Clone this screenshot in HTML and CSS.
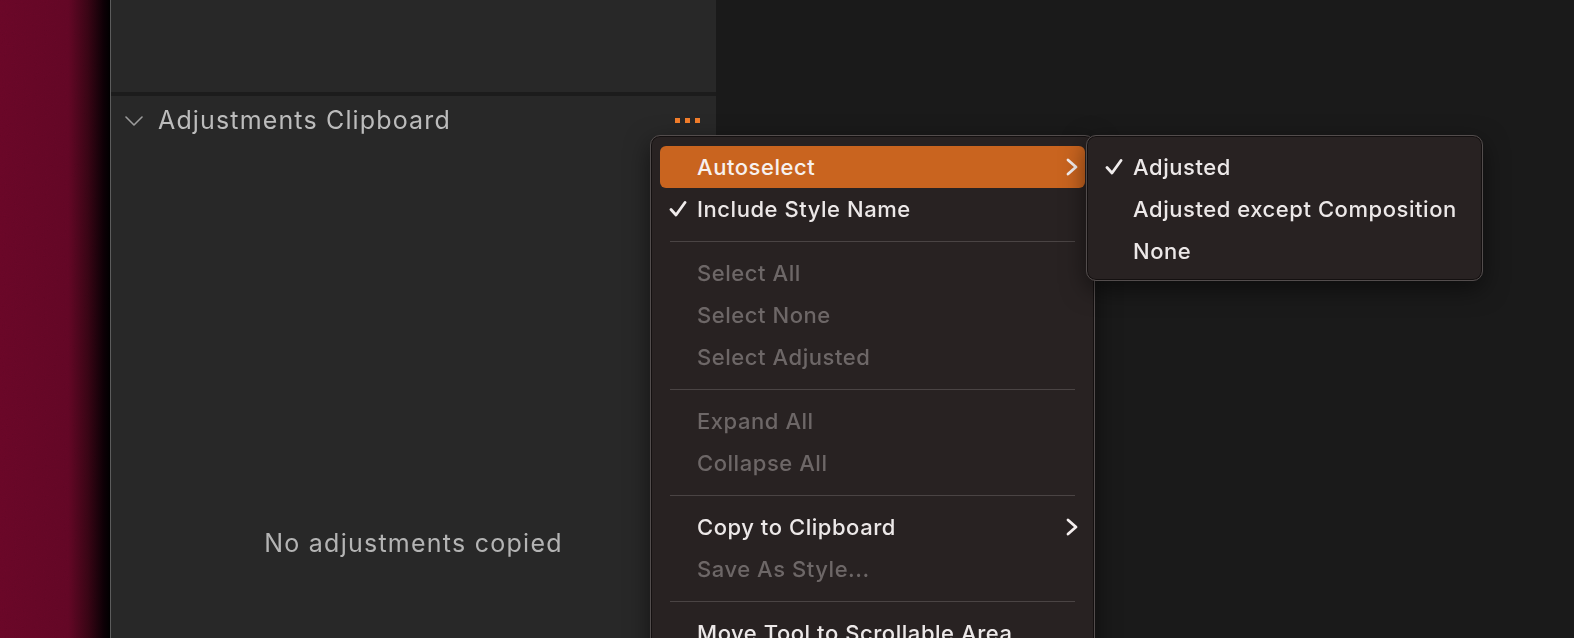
FILE: index.html
```html
<!DOCTYPE html>
<html lang="en">
<head>
<meta charset="utf-8">
<title>Adjustments Clipboard</title>
<link rel="stylesheet" href="styles.css">
</head>
<body>
<div class="desktop">
  <div class="wallpaper">
    <svg class="noise" width="100%" height="100%" xmlns="http://www.w3.org/2000/svg">
      <filter id="n"><feTurbulence type="fractalNoise" baseFrequency="0.9" numOctaves="2" stitchTiles="stitch"/><feColorMatrix type="saturate" values="0"/></filter>
      <rect width="100%" height="100%" filter="url(#n)"/>
    </svg>
  </div>
  <div class="panel">
    <div class="panel-top"></div>
    <div class="panel-divider"></div>
    <div class="section-head">
      <svg class="chev-down" width="18" height="10" viewBox="0 0 18 10"><path d="M1 1 L9 9 L17 1" fill="none" stroke="#9c9c9c" stroke-width="1.6" stroke-linecap="round" stroke-linejoin="round"/></svg>
      <span class="section-title">Adjustments Clipboard</span>
      <span class="dots"><i></i><i></i><i></i></span>
    </div>
    <div class="section-body">
      <span class="empty">No adjustments copied</span>
    </div>
  </div>
  <div class="workspace"></div>
</div>

<div class="menu main-menu">
  <div class="item active"><span class="check"></span><span class="label">Autoselect</span><svg class="sub" width="12" height="18" viewBox="0 0 12 18"><path d="M2 2 L10 9 L2 16" fill="none" stroke="#f4eeee" stroke-width="2.8" stroke-linecap="round" stroke-linejoin="round"/></svg></div>
  <div class="item"><span class="check"><svg width="18" height="16" viewBox="0 0 18 16"><path d="M2 8.5 L7 14 L16 1.5" fill="none" stroke="#f0ecec" stroke-width="2.8" stroke-linecap="round" stroke-linejoin="round"/></svg></span><span class="label">Include Style Name</span></div>
  <div class="sep"></div>
  <div class="item disabled"><span class="check"></span><span class="label">Select All</span></div>
  <div class="item disabled"><span class="check"></span><span class="label">Select None</span></div>
  <div class="item disabled"><span class="check"></span><span class="label">Select Adjusted</span></div>
  <div class="sep"></div>
  <div class="item disabled"><span class="check"></span><span class="label">Expand All</span></div>
  <div class="item disabled"><span class="check"></span><span class="label">Collapse All</span></div>
  <div class="sep"></div>
  <div class="item"><span class="check"></span><span class="label">Copy to Clipboard</span><svg class="sub" width="12" height="18" viewBox="0 0 12 18"><path d="M2 2 L10 9 L2 16" fill="none" stroke="#f4eeee" stroke-width="2.8" stroke-linecap="round" stroke-linejoin="round"/></svg></div>
  <div class="item disabled"><span class="check"></span><span class="label">Save As Style...</span></div>
  <div class="sep"></div>
  <div class="item"><span class="check"></span><span class="label">Move Tool to Scrollable Area</span></div>
</div>

<div class="menu sub-menu">
  <div class="item"><span class="check"><svg width="18" height="16" viewBox="0 0 18 16"><path d="M2 8.5 L7 14 L16 1.5" fill="none" stroke="#f0ecec" stroke-width="2.8" stroke-linecap="round" stroke-linejoin="round"/></svg></span><span class="label">Adjusted</span></div>
  <div class="item"><span class="check"></span><span class="label">Adjusted except Composition</span></div>
  <div class="item"><span class="check"></span><span class="label">None</span></div>
</div>
</body>
</html>
```

FILE: styles.css
```css
html, body {
  margin: 0;
  padding: 0;
  width: 1574px;
  height: 638px;
  overflow: hidden;
  background: #1a1a1a;
  font-family: Inter, "Noto Sans", "Liberation Sans", sans-serif;
}

.desktop {
  display: flex;
  height: 638px;
}

.wallpaper {
  width: 110px;
  flex: none;
  background: linear-gradient(to right, #680627 0%, #620625 62%, #380414 80%, #0d0005 94%, #000 100%);
  overflow: hidden;
}

.noise {
  display: block;
  opacity: 0.08;
  mix-blend-mode: overlay;
}

.panel {
  width: 605px;
  flex: none;
  background: #282828;
  border-left: 1px solid #5c5c5c;
  display: flex;
  flex-direction: column;
}

.panel-top {
  height: 92px;
}

.panel-divider {
  height: 4px;
  background: #1c1c1c;
}

.section-head {
  height: 48px;
  display: flex;
  align-items: center;
  padding: 0 16px 0 14px;
}

.chev-down {
  display: block;
  margin-right: 15px;
  margin-top: 2px;
}

.section-title {
  color: #bcbcbc;
  font-size: 25px;
  letter-spacing: 1.15px;
  flex: 1;
}

.dots {
  display: flex;
  gap: 5px;
}

.dots i {
  display: block;
  width: 5px;
  height: 5px;
  background: #f47e2b;
}

.section-body {
  flex: 1;
  display: flex;
  justify-content: center;
  align-items: flex-end;
  padding-bottom: 80px;
}

.empty {
  color: #b4b4b4;
  font-size: 25px;
  letter-spacing: 1.25px;
}

.workspace {
  flex: 1;
  background: #1a1a1a;
}

.menu {
  position: absolute;
  top: 135px;
  background: #282222;
  border: 1px solid #534d4d;
  border-radius: 10px;
  box-shadow: 0 8px 24px rgba(0, 0, 0, 0.5), inset 0 0 0 1px #141010;
  padding: 10px 9px;
  box-sizing: border-box;
}

.main-menu {
  left: 650px;
  width: 445px;
  height: 540px;
}

.sub-menu {
  left: 1086px;
  width: 397px;
  height: 146px;
  z-index: 2;
}

.item {
  height: 42px;
  display: flex;
  align-items: center;
  border-radius: 6px;
  color: #ece8e8;
  font-size: 22px;
  font-weight: 500;
  letter-spacing: 0.55px;
}

.item.active {
  background: #c9641f;
  color: #f7f1ef;
}

.item.disabled {
  color: #6d6767;
}

.check {
  width: 37px;
  padding-left: 9px;
  box-sizing: border-box;
  flex: none;
  display: flex;
  align-items: center;
}

.check svg {
  display: block;
}

.label {
  flex: 1;
  white-space: nowrap;
}

.sub {
  display: block;
  margin-right: 7px;
}

.sep {
  height: 22px;
  display: flex;
  align-items: center;
  padding: 0 10px;
}

.sep::after {
  content: "";
  display: block;
  flex: 1;
  height: 1px;
  background: #4a4444;
}
```
